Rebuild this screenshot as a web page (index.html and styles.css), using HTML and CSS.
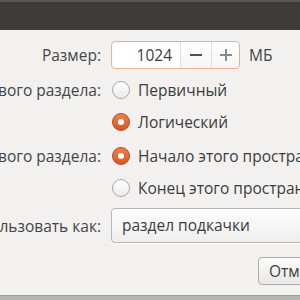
FILE: index.html
```html
<!DOCTYPE html>
<html lang="ru">
<head>
<meta charset="utf-8">
<link rel="stylesheet" href="styles.css">
</head>
<body>
<div class="window">
  <div class="titlebar"></div>
  <div class="content">
    <div class="row row-spin">
      <div class="label"><span>Размер:</span></div>
      <div class="control">
        <div class="spin">
          <div class="spin-entry">1024</div>
          <div class="spin-btn minus">
            <svg width="12" height="12" viewBox="0 0 12 12"><rect x="0" y="5" width="12" height="2" fill="#4f4f4f"/></svg>
          </div>
          <div class="spin-btn plus">
            <svg width="12" height="12" viewBox="0 0 12 12"><rect x="0" y="5" width="12" height="2" fill="#8a8a8a"/><rect x="5" y="0" width="2" height="12" fill="#8a8a8a"/></svg>
          </div>
        </div>
        <span class="unit">МБ</span>
      </div>
    </div>
    <div class="row row-radio row-first">
      <div class="label"><span>Тип нового раздела:</span></div>
      <div class="control"><span class="radio"></span><span class="opt">Первичный</span></div>
    </div>
    <div class="row row-radio">
      <div class="label"></div>
      <div class="control"><span class="radio checked"></span><span class="opt">Логический</span></div>
    </div>
    <div class="row row-radio row-gap">
      <div class="label"><span>Местоположение нового раздела:</span></div>
      <div class="control"><span class="radio checked"></span><span class="opt">Начало этого пространства</span></div>
    </div>
    <div class="row row-radio">
      <div class="label"></div>
      <div class="control"><span class="radio"></span><span class="opt">Конец этого пространства</span></div>
    </div>
    <div class="row row-combo">
      <div class="label"><span>Использовать как:</span></div>
      <div class="control"><div class="combo">раздел подкачки</div></div>
    </div>
    <div class="buttons">
      <div class="button">Отмена</div>
    </div>
  </div>
  <div class="bottom"></div>
</div>
</body>
</html>
```
FILE: styles.css
```css
html, body {
  margin: 0;
  padding: 0;
}
body {
  width: 300px;
  height: 300px;
  overflow: hidden;
  font-family: "Open Sans", "Noto Sans", sans-serif;
  font-size: 15.5px;
  color: #3c3c3c;
}
.window {
  width: 300px;
  height: 300px;
  display: flex;
  flex-direction: column;
  background: #f2f1f0;
  overflow: hidden;
}
.titlebar {
  height: 28px;
  flex: none;
  background: #3d3c38;
  border-top: 2px solid #5a5954;
}
.content {
  height: 265px;
  flex: none;
  display: flex;
  flex-direction: column;
}
.bottom {
  flex: 1;
  background: #b5b5b3;
  border-top: 1px solid #9d9d9b;
}
.row {
  display: flex;
  align-items: center;
  gap: 10px;
}
.label {
  width: 101px;
  flex: none;
  display: flex;
  justify-content: flex-end;
  overflow: hidden;
  white-space: nowrap;
  color: #454545;
}
.label span {
  flex: none;
}
.control {
  display: flex;
  align-items: center;
  white-space: nowrap;
  flex: none;
}
.row-spin {
  margin-top: 11px;
  height: 28px;
}
.spin {
  display: flex;
  height: 26px;
  width: 127px;
  border: 1px solid #eaaf97;
  border-radius: 4px;
  background: #fff;
  box-shadow: inset 0 1px 2px rgba(0,0,0,0.06);
}
.spin-entry {
  width: 60px;
  padding-right: 8px;
  text-align: right;
  line-height: 26px;
  color: #3c3c3c;
}
.spin-btn {
  display: flex;
  align-items: center;
  justify-content: center;
  border-left: 1px solid #e2e0dd;
  background: linear-gradient(#ffffff, #f6f5f4);
}
.minus {
  width: 30px;
}
.plus {
  flex: 1;
  border-radius: 0 4px 4px 0;
}
.unit {
  margin-left: 9px;
  color: #454545;
}
.row-radio {
  height: 32px;
}
.row-first {
  margin-top: 5px;
}
.row-gap {
  margin-top: 2px;
}
.radio {
  width: 16px;
  height: 16px;
  border-radius: 50%;
  border: 1px solid #a9a7a3;
  background: linear-gradient(#ffffff, #ecebea);
  box-sizing: content-box;
  margin-left: 1px;
  margin-right: 8px;
  position: relative;
  flex: none;
}
.radio.checked {
  border-color: #b8461a;
  background: linear-gradient(#ef8152, #d9571f);
}
.radio.checked::after {
  content: "";
  position: absolute;
  left: 5px;
  top: 5px;
  width: 6px;
  height: 6px;
  border-radius: 50%;
  background: #fff;
}
.opt {
  color: #3c3c3c;
}
.row-combo {
  margin-top: 4px;
  height: 35px;
}
.combo {
  width: 220px;
  height: 33px;
  line-height: 33px;
  padding-left: 10px;
  border: 1px solid #b9b7b3;
  border-radius: 4px;
  background: linear-gradient(#fdfdfd, #efeeed);
  box-shadow: 0 1px 0 rgba(255,255,255,0.8);
  color: #3c3c3c;
}
.buttons {
  margin-top: 14px;
  padding-left: 258px;
  display: flex;
}
.button {
  flex: none;
  height: 26px;
  line-height: 26px;
  width: 80px;
  padding-left: 10px;
  border: 1px solid #aeaca8;
  border-radius: 4px;
  background: linear-gradient(#fbfbfa, #e9e8e6);
  white-space: nowrap;
  color: #3c3c3c;
}
```
